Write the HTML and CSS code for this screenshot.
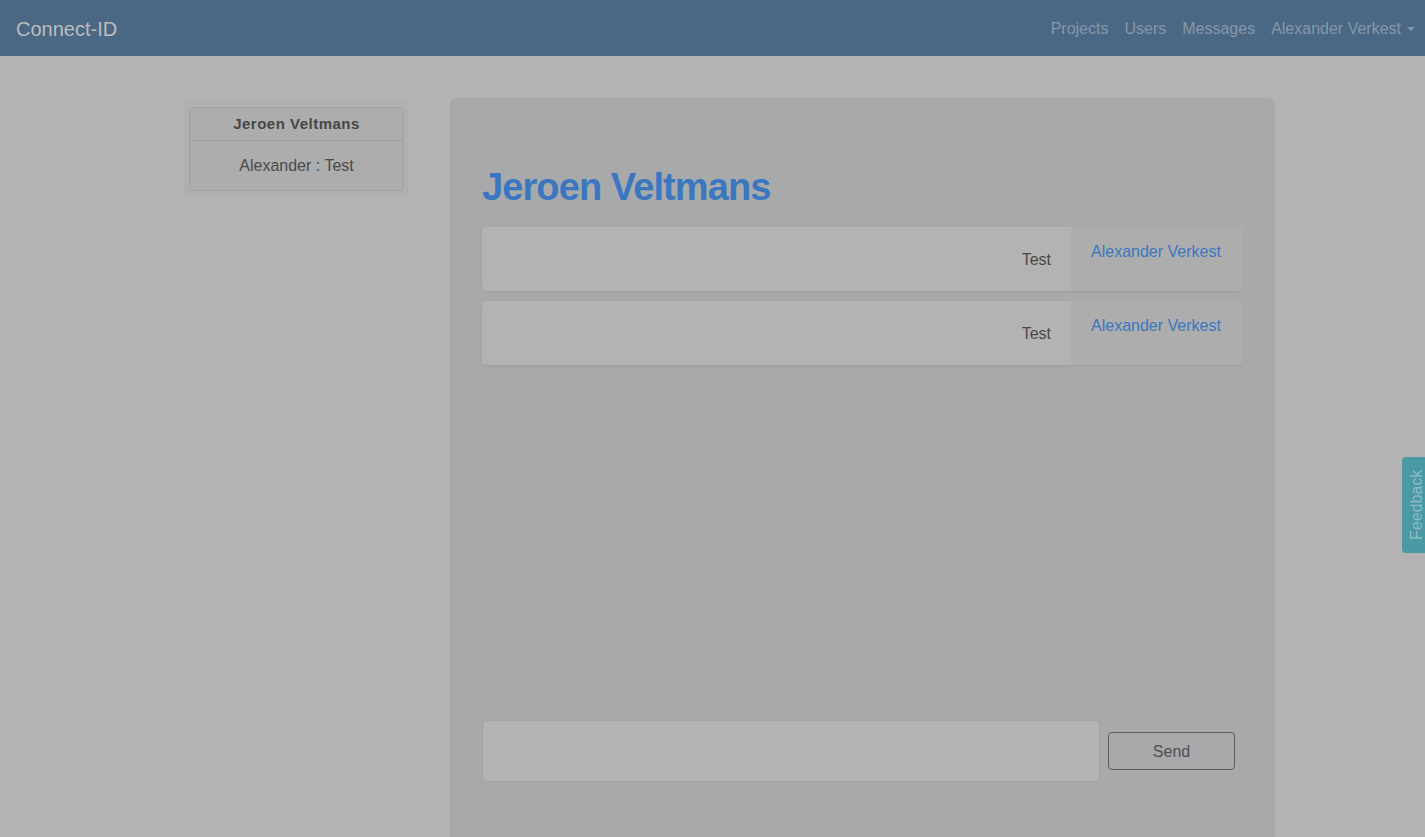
FILE: index.html
```html
<!DOCTYPE html>
<html lang="en">
<head>
<meta charset="utf-8">
<title>Connect-ID</title>
<link rel="stylesheet" href="styles.css">
</head>
<body>
<nav class="navbar">
  <a class="brand" href="#">Connect-ID</a>
  <ul class="nav-links">
    <li><a href="#">Projects</a></li>
    <li><a href="#">Users</a></li>
    <li><a href="#">Messages</a></li>
    <li><a href="#" class="dropdown">Alexander Verkest<span class="caret"></span></a></li>
  </ul>
</nav>
<main class="layout">
  <aside class="sidebar">
    <div class="conv-card">
      <div class="conv-head">Jeroen Veltmans</div>
      <div class="conv-body">Alexander : Test</div>
    </div>
  </aside>
  <section class="chat">
    <h1 class="chat-title">Jeroen Veltmans</h1>
    <div class="messages">
      <div class="msg">
        <div class="msg-text">Test</div>
        <div class="msg-author"><a href="#">Alexander Verkest</a></div>
      </div>
      <div class="msg">
        <div class="msg-text">Test</div>
        <div class="msg-author"><a href="#">Alexander Verkest</a></div>
      </div>
    </div>
    <form class="send-form">
      <textarea class="send-input"></textarea>
      <button type="button" class="send-btn">Send</button>
    </form>
  </section>
</main>
<div class="feedback">Feedback</div>
</body>
</html>
```
FILE: styles.css
```css
* { box-sizing: border-box; }
html, body { margin: 0; height: 100%; }
body {
  background: #b3b3b3;
  font-family: "Liberation Sans", Arial, sans-serif;
  font-size: 16px;
  line-height: 1.5;
  color: #4a4a4a;
  overflow: hidden;
}
a { text-decoration: none; }

.navbar {
  height: 56px;
  background: #4a6784;
  display: flex;
  align-items: center;
  justify-content: space-between;
  padding: 1px 2px 0 16px;
}
.brand {
  color: #bdbdbd;
  font-size: 20px;
  line-height: 30px;
}
.nav-links {
  list-style: none;
  margin: 0;
  padding: 0;
  display: flex;
}
.nav-links a {
  display: flex;
  align-items: center;
  padding: 8px 8px;
  color: #8797a9;
}
.caret {
  display: inline-block;
  margin-left: 6px;
  width: 0;
  height: 0;
  border-left: 4px solid transparent;
  border-right: 4px solid transparent;
  border-top: 4px solid #8797a9;
}

.layout {
  display: flex;
  align-items: flex-start;
  padding: 42px 0 0 184px;
}
.sidebar {
  width: 225px;
  margin-top: 4px;
  padding: 5px;
  background: #b0b0b0;
  border-radius: 4px;
}
.conv-card {
  background: #adadad;
  border: 1px solid #a2a2a2;
  border-radius: 4px;
  text-align: center;
}
.conv-head {
  font-weight: bold;
  font-size: 15px;
  letter-spacing: 0.5px;
  line-height: 32px;
  border-bottom: 1px solid #a0a0a0;
  color: #464646;
}
.conv-body {
  font-size: 16px;
  line-height: 49px;
  color: #4a4a4a;
}

.chat {
  margin-left: 41px;
  width: 825px;
  height: 760px;
  background: #a8a9ab;
  border-radius: 6px 6px 0 0;
  padding: 65px 32px 0 32px;
}
.chat-title {
  margin: 0 0 16px;
  font-size: 38px;
  line-height: 48px;
  font-weight: 600;
  letter-spacing: -0.9px;
  color: #3a77c0;
}
.messages {
  height: 493px;
  display: flex;
  flex-direction: column;
  gap: 10px;
}
.msg {
  display: flex;
  height: 64px;
  background: #b3b3b3;
  border-radius: 4px;
  box-shadow: 0 1px 2px rgba(0,0,0,0.08);
  overflow: hidden;
}
.msg-text {
  flex: 1;
  display: flex;
  align-items: center;
  justify-content: flex-end;
  padding: 2px 20px 0 0;
  color: #484848;
}
.msg-author {
  width: 172px;
  background: #adadad;
  padding: 13px 20px 0;
}
.msg-author a { color: #3a77c0; }

.send-form {
  display: flex;
  align-items: center;
}
.send-input {
  width: 618px;
  height: 62px;
  background: #b3b3b3;
  border: 1px solid #a3a3a3;
  border-radius: 4px;
  resize: none;
  margin: 0;
}
.send-btn {
  margin-left: 8px;
  width: 127px;
  height: 38px;
  padding-top: 3px;
  background: transparent;
  border: 1px solid #5c5c5c;
  border-radius: 4px;
  font-family: "Liberation Sans", Arial, sans-serif;
  font-size: 16px;
  color: #4e4e4e;
}

.feedback {
  position: fixed;
  right: 0;
  top: 457px;
  width: 23px;
  height: 96px;
  background: #4a99a3;
  color: #8fbcc2;
  font-size: 16px;
  writing-mode: vertical-rl;
  transform: rotate(180deg);
  display: flex;
  align-items: center;
  justify-content: center;
  padding-right: 6px;
  line-height: 23px;
  border-radius: 0 4px 4px 0;
}
```
